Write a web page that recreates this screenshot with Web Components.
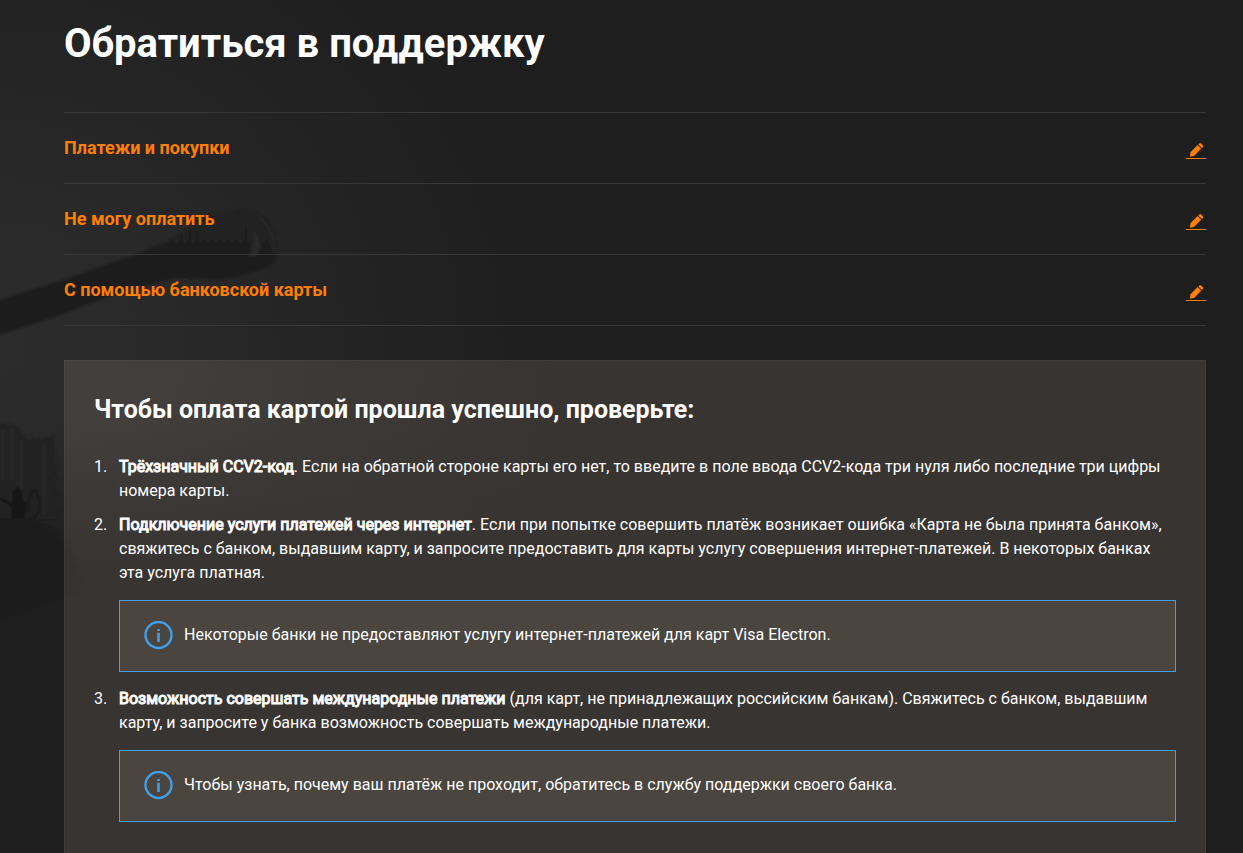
<!DOCTYPE html>
<html lang="ru">
<head>
<meta charset="utf-8">
<meta name="viewport" content="width=device-width, initial-scale=1">
<title>Обратиться в поддержку</title>
<style>
  html { background: #1e1e1e; }
  body { margin: 0; font-family: Roboto, "Liberation Sans", sans-serif; font-size: 16px; line-height: 24px; color: #fff; }
</style>
</head>
<body>
<support-page>
  <h1 slot="title">Обратиться в поддержку</h1>
  <support-step slot="steps">Платежи и покупки</support-step>
  <support-step slot="steps">Не могу оплатить</support-step>
  <support-step slot="steps">С помощью банковской карты</support-step>
  <answer-card>
    <span slot="heading">Чтобы оплата картой прошла успешно, проверьте:</span>
    <check-item number="1"><b>Трёхзначный CCV2-код</b>. Если на обратной стороне карты его нет, то введите в поле ввода CCV2-кода три нуля либо последние три цифры номера карты.</check-item>
    <check-item number="2"><b>Подключение услуги платежей через интернет</b>. Если при попытке совершить платёж возникает ошибка «Карта не была принята банком», свяжитесь с банком, выдавшим карту, и запросите предоставить для карты услугу совершения интернет-платежей. В некоторых банках эта услуга платная.
      <info-note slot="note">Некоторые банки не предоставляют услугу интернет-платежей для карт Visa Electron.</info-note></check-item>
    <check-item number="3"><b>Возможность совершать международные платежи</b> (для карт, не принадлежащих российским банкам). Свяжитесь с банком, выдавшим карту, и запросите у банка возможность совершать международные платежи.
      <info-note slot="note">Чтобы узнать, почему ваш платёж не проходит, обратитесь в службу поддержки своего банка.</info-note></check-item>
  </answer-card>
</support-page>
<script>
  const define = (name, html, setup) => {
    const template = document.createElement('template');
    template.innerHTML = html;
    customElements.define(name, class extends HTMLElement {
      constructor() {
        super();
        this.attachShadow({ mode: 'open' }).append(template.content.cloneNode(true));
      }
      connectedCallback() { if (setup) setup(this); }
    });
  };

  define('page-backdrop', `
    <style>
      :host { display: block; position: absolute; inset: 0; z-index: -1; overflow: hidden;
        background: radial-gradient(ellipse 560px 520px at 0 350px, #2c2c2c 0, #292929 30%, #242424 58%, #1e1e1e 100%); }
      svg { display: block; }
    </style>
    <svg width="600" height="900" viewBox="0 0 600 900" aria-hidden="true">
      <defs>
        <linearGradient id="barrel" x1="0" y1="0" x2="0" y2="1">
          <stop offset="0" stop-color="#212121"/><stop offset="1" stop-color="#1c1c1c"/>
        </linearGradient>
        <linearGradient id="fade" x1="0" y1="0" x2="0" y2="1">
          <stop offset="0" stop-color="#1e1e1e" stop-opacity="0"/><stop offset="1" stop-color="#1e1e1e"/>
        </linearGradient>
        <filter id="soft" x="-10%" y="-10%" width="120%" height="120%"><feGaussianBlur stdDeviation="1"/></filter>
      </defs>
      <rect y="420" width="600" height="150" fill="url(#fade)"/>
      <rect y="570" width="600" height="330" fill="#1e1e1e"/>
      <g filter="url(#soft)">
        <path fill="url(#barrel)" d="M-4 301 L60 281 140 253 168 241 190 229 205 217 Q222 209 248 210 Q268 214 276 236 L278 254 Q277 262 268 267 Q236 279 215 280 L200 278 172 279 120 292 60 315 -4 336Z"/>
        <path fill="#292929" d="M254 230q7 8 6 18l-4 8h-6q4-12 4-26z"/>
        <path fill="none" stroke="#282828" stroke-width="3" d="M260 219q14 10 15 34"/>
        <path fill="none" stroke="#1a1a1a" stroke-width="2" d="M182 236v15M190 231v20M197 231v20M246 226v26"/>
        <path fill="#222" d="M-4 424q18-3 26 8l6 8 26-4 4 83H-4z"/>
        <path fill="none" stroke="#2a2a2a" stroke-width="3" d="M3 430v50M12 428v52M21 440v50M44 444v70"/>
        <path fill="#191919" d="M13 490q5-5 9 0v9l5 4-3 16H12l-1-12-11-7v-3l12 6z"/>
        <path fill="none" stroke="#191919" stroke-width="2" d="M29 513q-2-14 4-24M35 489q8 16 3 24l-6 6"/>
        <path fill="#1e1e1e" d="M-4 518h34q26 8 37 27 12 20 16 45l-87 30z"/>
      </g>
    </svg>`);

  define('support-page', `
    <style>
      :host { display: block; position: relative; z-index: 0; overflow: hidden; min-height: 100vh; box-sizing: border-box; padding: 20px 37px 0 64px; }
      ::slotted(h1) { margin: 0 0 44px; font-size: 40px; line-height: 48px; font-weight: 700; }
      nav { border-top: 1px solid #383838; margin-bottom: 34px; }
    </style>
    <page-backdrop></page-backdrop>
    <main>
      <slot name="title"></slot>
      <nav><slot name="steps"></slot></nav>
      <slot></slot>
    </main>`);

  define('support-step', `
    <style>
      :host { display: flex; justify-content: space-between; align-items: center; height: 70px; border-bottom: 1px solid #383838;
        color: #ff7f00; font-size: 18px; font-weight: 700; }
      a { display: flex; color: inherit; border-bottom: 1px solid; margin-top: 4px; padding: 0 2px; }
      svg { display: block; }
    </style>
    <span><slot></slot></span>
    <a href="#" aria-label="Изменить">
      <svg width="16" height="16" viewBox="0 0 16 16" fill="currentColor" aria-hidden="true">
        <path d="M2.4 10.3 9.6 3.1l3.6 3.6L6 13.9l-4 .8zM10.3 2.4l1-1q.8-.8 1.7 0l1.9 1.9q.8.9 0 1.7l-1 1z"/>
      </svg>
    </a>`);

  define('answer-card', `
    <style>
      :host { display: block; box-sizing: border-box; min-height: 520px; padding: 29px; border: 1px solid #ffffff0a;
        background: #fbdcc81e; background-clip: border-box; }
      h2 { margin: 0; padding: 3px 0 29px; font-size: 25px; line-height: 33px; font-weight: 700; }
      div { display: grid; gap: 10px; }
    </style>
    <h2><slot name="heading"></slot></h2>
    <div role="list"><slot></slot></div>`);

  define('check-item', `
    <style>
      :host { display: grid; grid-template-columns: 25px 1fr; }
      p { margin: 0; }
      ::slotted(b) { font-weight: 400; -webkit-text-stroke: 1px currentColor; }
      ::slotted(info-note) { margin: 15px 0 5px; }
      .note { grid-column: 2; }
    </style>
    <span class="number"></span>
    <p><slot></slot></p>
    <div class="note"><slot name="note"></slot></div>`,
    el => {
      el.setAttribute('role', 'listitem');
      el.shadowRoot.querySelector('.number').textContent = el.getAttribute('number') + '.';
    });

  define('info-note', `
    <style>
      :host { display: flex; align-items: flex-start; gap: 11px; box-sizing: border-box; min-height: 72px; padding: 20px 24px 21px;
        border: 1px solid #429fe8; background: #ffeebf18; }
      svg { flex: none; display: block; }
      span { padding-top: 2px; }
    </style>
    <svg width="29" height="29" viewBox="0 0 29 29" aria-hidden="true">
      <circle cx="14.5" cy="14" r="13" fill="none" stroke="#429fe8" stroke-width="2.4"/>
      <path fill="#429fe8" d="M13.2 8h2.6v2h-2.6zM13.2 11.8h2.6V21h-2.6z"/>
    </svg>
    <span><slot></slot></span>`);
</script>
</body>
</html>
